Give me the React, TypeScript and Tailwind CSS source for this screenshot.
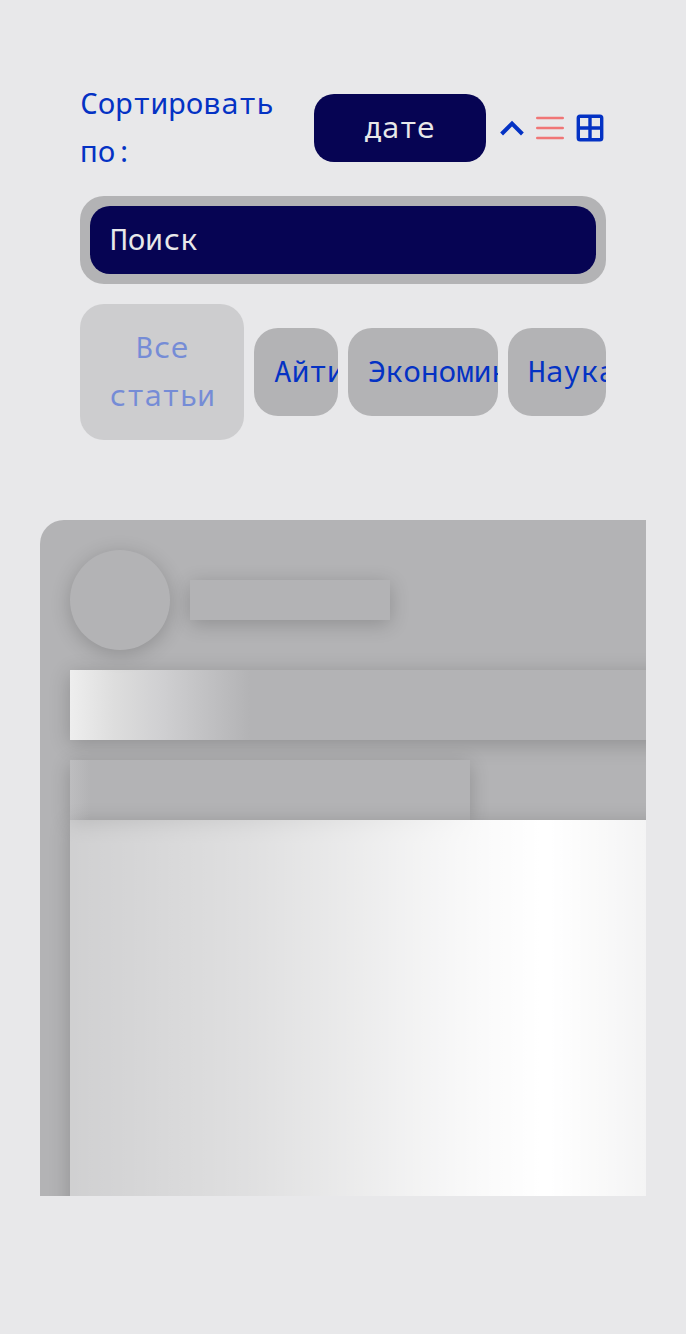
const chips = [
  { label: "Айти", box: "w-[84px]" },
  { label: "Экономика", box: "w-[150px]" },
  { label: "Наука", box: "w-[98px]" },
];

const shadow = "shadow-[0_4px_20px_rgba(0,0,0,0.2)]";

export default function App() {
  return (
    <div className="min-h-[1334px] overflow-hidden bg-[#e8e8ea] px-10 pt-20 font-['Noto_Sans_Mono','Liberation_Mono',monospace] text-[29.4px] leading-[48px] text-[#0432c4]">
      <div className="flex flex-col gap-5 px-10">
        <div className="flex h-24 items-center">
          <div className="w-[234px] -translate-y-px">
            Сортировать
            <br />
            по:
          </div>
          <button className="h-[68px] w-[172px] rounded-[20px] bg-[#060453] pr-px pb-[2px] text-[#e8e8ea]">
            дате
          </button>
          <svg className="ml-[14px] h-6 w-6 shrink-0" viewBox="0 0 24 24" fill="none" stroke="#0432c4" strokeWidth="4">
            <path d="M1.6 18 12 7.6 22.4 18" />
          </svg>
          <svg className="ml-3 h-7 w-7 shrink-0" viewBox="0 0 28 28" fill="none" stroke="#f07676" strokeWidth="2.5" strokeLinecap="round">
            <path d="M1.25 4h25.5M1.25 14h25.5M1.25 24h25.5" />
          </svg>
          <svg className="ml-3 h-7 w-7 shrink-0" viewBox="0 0 28 28" fill="none" stroke="#0432c4" strokeWidth="3.4">
            <rect x="2.3" y="2.3" width="23.4" height="23.4" rx="1.8" />
            <path d="M14 2v24M2 14h24" />
          </svg>
        </div>

        <div className="rounded-3xl bg-[#b3b3b5] p-[10px]">
          <input
            className="block h-[68px] w-full rounded-[20px] bg-[#060453] px-5 pb-[2px] text-[#e8e8ea] outline-none placeholder:text-[#e8e8ea]"
            placeholder="Поиск"
          />
        </div>

        <div className="flex items-center gap-[10px]">
          <button className="w-[164px] shrink-0 rounded-3xl bg-[#b3b3b5] px-5 pt-[19px] pb-[21px] opacity-50">
            Все статьи
          </button>
          {chips.map((c) => (
            <button
              key={c.label}
              className={`h-[88px] shrink-0 overflow-hidden rounded-3xl bg-[#b3b3b5] pb-[2px] pl-5 text-left whitespace-nowrap ${c.box}`}
            >
              {c.label}
            </button>
          ))}
        </div>
      </div>

      <div className="mt-20 h-[676px] overflow-hidden rounded-tl-3xl bg-[#b3b3b5] pt-[30px] pl-[30px]">
        <div className="flex items-center gap-5">
          <div className={`h-[100px] w-[100px] rounded-full bg-[#b3b3b5] ${shadow}`} />
          <div className={`h-10 w-[200px] bg-[#b3b3b5] ${shadow}`} />
        </div>
        <div
          className={`mt-5 h-[70px] w-[900px] bg-[#b3b3b5] bg-[linear-gradient(90deg,#eeeeee_0px,#dddddd_45px,#d0d0d2_90px,#b3b3b5_180px)] ${shadow}`}
        />
        <div
          className={`mt-5 h-[60px] w-[400px] bg-[#b3b3b5] bg-[linear-gradient(90deg,#bdbdbf_0px,#b3b3b5_20px)] ${shadow}`}
        />
        <div
          className={`h-[600px] w-[1100px] bg-[linear-gradient(90deg,rgba(255,255,255,0.38)_0px,rgba(255,255,255,0.59)_180px,rgba(255,255,255,0.74)_283px,rgba(255,255,255,0.9)_385px,#fff_470px,#fff_480px,rgba(255,255,255,0.86)_576px)] ${shadow}`}
        />
      </div>
    </div>
  );
}
